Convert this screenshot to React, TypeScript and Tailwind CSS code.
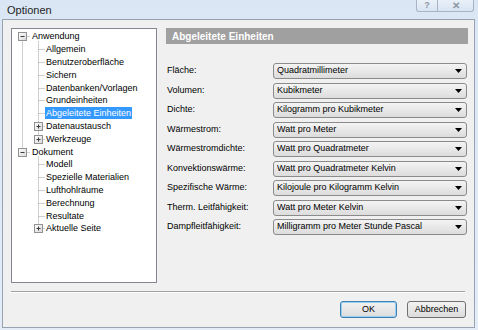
import React from 'react'

const treeItems = [
    { label: 'Anwendung', level: 0 },
    { label: 'Allgemein', level: 1 },
    { label: 'Benutzeroberfläche', level: 1 },
    { label: 'Sichern', level: 1 },
    { label: 'Datenbanken/Vorlagen', level: 1 },
    { label: 'Grundeinheiten', level: 1 },
    { label: 'Abgeleitete Einheiten', level: 1, selected: true },
    { label: 'Datenaustausch', level: 1 },
    { label: 'Werkzeuge', level: 1 },
    { label: 'Dokument', level: 0 },
    { label: 'Modell', level: 1 },
    { label: 'Spezielle Materialien', level: 1 },
    { label: 'Lufthohlräume', level: 1 },
    { label: 'Berechnung', level: 1 },
    { label: 'Resultate', level: 1 },
    { label: 'Aktuelle Seite', level: 1 },
]

const units = [
    ['Fläche:', 'Quadratmillimeter'],
    ['Volumen:', 'Kubikmeter'],
    ['Dichte:', 'Kilogramm pro Kubikmeter'],
    ['Wärmestrom:', 'Watt pro Meter'],
    ['Wärmestromdichte:', 'Watt pro Quadratmeter'],
    ['Konvektionswärme:', 'Watt pro Quadratmeter Kelvin'],
    ['Spezifische Wärme:', 'Kilojoule pro Kilogramm Kelvin'],
    ['Therm. Leitfähigkeit:', 'Watt pro Meter Kelvin'],
    ['Dampfleitfähigkeit:', 'Milligramm pro Meter Stunde Pascal'],
]

const ROW = 12.8
const TOP = 1
const cy = (i: number) => TOP + ROW * i + ROW / 2

// expander box drawn in the tree overlay
const Box = ({ x, y, open }: { x: number, y: number, open: boolean }) => (
    <g>
        <rect x={x - 4} y={y - 4} width={8} height={8} fill="url(#boxfill)" stroke="#919191" strokeWidth={1} />
        <line x1={x - 2} y1={y} x2={x + 2} y2={y} stroke="#3b3b3b" strokeWidth={1} />
        {!open && <line x1={x} y1={y - 2} x2={x} y2={y + 2} stroke="#3b3b3b" strokeWidth={1} />}
    </g>
)

const TreeLines = () => {
    const dot = { stroke: '#a0a0a0', strokeWidth: 1, strokeDasharray: '1 1' }
    const rx = 10.5
    const cx = 26.5
    const expandable = [7, 8, 15]
    return (
        <svg className='absolute inset-0 pointer-events-none' width={144} height={253}>
            <defs>
                <linearGradient id="boxfill" x1="0" y1="0" x2="1" y2="1">
                    <stop offset="0" stopColor="#ffffff" />
                    <stop offset="1" stopColor="#d8d8d8" />
                </linearGradient>
            </defs>
            {/* root level */}
            <line x1={rx} y1={cy(0)} x2={rx} y2={cy(9)} {...dot} />
            <line x1={rx} y1={Math.round(cy(0)) + 0.5} x2={18} y2={Math.round(cy(0)) + 0.5} {...dot} />
            <line x1={rx} y1={Math.round(cy(9)) + 0.5} x2={18} y2={Math.round(cy(9)) + 0.5} {...dot} />
            {/* children */}
            <line x1={cx} y1={cy(0) + 5} x2={cx} y2={cy(8)} {...dot} />
            <line x1={cx} y1={cy(9) + 5} x2={cx} y2={cy(15)} {...dot} />
            {treeItems.map((item, i) => item.level === 1 && (
                <line key={i} x1={cx} y1={Math.round(cy(i)) + 0.5} x2={33} y2={Math.round(cy(i)) + 0.5} {...dot} />
            ))}
            <Box x={10.5} y={Math.round(cy(0)) + 0.5} open={true} />
            <Box x={10.5} y={Math.round(cy(9)) + 0.5} open={true} />
            {expandable.map((i) => (
                <Box key={i} x={cx} y={Math.round(cy(i)) + 0.5} open={false} />
            ))}
        </svg>
    )
}

const Select = ({ value }: { value: string }) => (
    <div className='h-[16px] w-[194px] flex items-center rounded-[3px] border border-[#8b8b8b] bg-gradient-to-b from-[#f4f4f4] to-[#dcdcdc] pl-[3px] pr-[4px] text-black'>
        <span className='flex-1 truncate'>{value}</span>
        <svg width="7" height="4" viewBox="0 0 7 4">
            <path d="M0 0h7L3.5 4z" fill="#000" />
        </svg>
    </div>
)

const App = () => {
    return (
        <div className="w-[478px] h-[330px] bg-gradient-to-b from-[#dae6f4] to-[#e3ecf7] font-['Liberation_Sans',Arial,sans-serif] text-[9px] text-black overflow-hidden">
            <div className='h-[19px] flex items-start'>
                <span className='pl-[7px] pt-[2px] text-[11px] text-[#1e1e1e]'>Optionen</span>
                <div className='ml-auto mr-[4px] flex'>
                    <div className='w-[22px] h-[12px] flex items-center justify-center border border-t-0 border-[#a6b4c5] rounded-bl-[3px] bg-gradient-to-b from-[#e9f0f8] to-[#d9e4f2] text-[9px] font-bold text-[#8c96a3]'>?</div>
                    <div className='w-[36px] h-[12px] flex items-center justify-center border border-t-0 border-l-0 border-[#a6b4c5] rounded-br-[3px] bg-gradient-to-b from-[#e9f0f8] to-[#d9e4f2] text-[10px] font-bold text-[#8c96a3]'>✕</div>
                </div>
            </div>
            <div className='ml-[2px] w-[473px] h-[309px] border border-[#97a3b2] bg-[#f0f0f0] pl-[8px] pt-[8px]'>
                <div className='flex'>
                    <div className='relative w-[146px] h-[255px] border border-[#828790] bg-white'>
                        <TreeLines />
                        <div className='pt-[1px]'>
                            {treeItems.map((item) => (
                                <div key={item.label} className={`h-[12.8px] flex items-center ${item.level === 0 ? 'pl-[19px]' : 'pl-[33px]'}`}>
                                    <span className={`px-[1px] leading-[12px] ${item.selected ? 'bg-[#3399ff] text-white' : ''}`}>{item.label}</span>
                                </div>
                            ))}
                        </div>
                    </div>
                    <div className='ml-[9px] w-[302px]'>
                        <div className='h-[16px] bg-[#a0a0a0] pl-[6px] flex items-center text-[10px] font-bold text-white'>Abgeleitete Einheiten</div>
                        <div className='mt-[19px] flex flex-col gap-[3.5px]'>
                            {units.map(([label, value]) => (
                                <div key={label} className='flex items-center'>
                                    <span className='w-[107px] pl-[1px]'>{label}</span>
                                    <Select value={value} />
                                </div>
                            ))}
                        </div>
                    </div>
                </div>
                <div className='mt-[8px] w-[454px] h-[2px] border-t border-[#a0a0a0] border-b border-b-white'></div>
                <div className='mt-[8px] w-[455px] flex justify-end gap-[10px]'>
                    <button className='w-[57px] h-[17px] rounded-[3px] border border-[#3c7fb1] bg-gradient-to-b from-[#f2f2f2] to-[#dcdcdc] text-[9px] shadow-[inset_0_0_0_1px_#9bd0f0]'>OK</button>
                    <button className='w-[59px] h-[17px] rounded-[3px] border border-[#707070] bg-gradient-to-b from-[#f2f2f2] to-[#dcdcdc] text-[9px]'>Abbrechen</button>
                </div>
            </div>
        </div>
    )
}

export default App
